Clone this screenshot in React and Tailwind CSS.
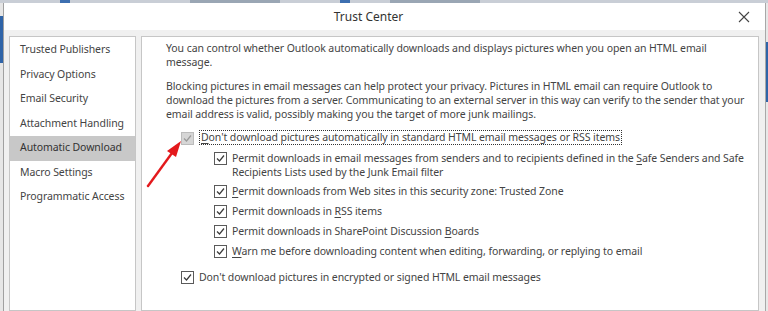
import React from "react";

const font = { fontFamily: '"Noto Sans", "Open Sans", sans-serif' };

function Box({ disabled }) {
  return (
    <span
      className={
        "mt-[1px] flex h-[13px] w-[13px] shrink-0 items-center justify-center border " +
        (disabled ? "border-[#bcbcbc] bg-[#d6d6d6]" : "border-[#5a5a5a] bg-white")
      }
    >
      <svg width="11" height="11" viewBox="0 0 11 11">
        <polyline
          points="2,5.5 4.5,8 9,2.5"
          fill="none"
          stroke={disabled ? "#9a9a9a" : "#3a3a3a"}
          strokeWidth="1.2"
        />
      </svg>
    </span>
  );
}

function U({ children }) {
  return <span className="underline underline-offset-2">{children}</span>;
}

function Row({ children, disabled, indent, h = "h-[20px]", focus }) {
  return (
    <div className={"flex items-start gap-[5px] py-[3px] " + h + (indent ? " pl-[33px]" : "")}>
      <Box disabled={disabled} />
      <div className={focus ? "border border-dotted border-[#333] px-[1px] -mt-[1px] leading-[13px]" : ""}>
        {children}
      </div>
    </div>
  );
}

export default function App() {
  const nav = [
    "Trusted Publishers",
    "Privacy Options",
    "Email Security",
    "Attachment Handling",
    "Automatic Download",
    "Macro Settings",
    "Programmatic Access",
  ];
  return (
    <div
      className="relative flex h-[311px] w-[768px] flex-col overflow-hidden bg-[#dfe3e8] text-[10.5px] tracking-[-0.08px] text-[#444]"
      style={font}
    >
      {/* background taskbar strip */}
      <div className="flex h-[3px] shrink-0 bg-[#c9ced6]">
        <div className="ml-[60px] w-[10px] bg-[#3d6fb0]" />
        <div className="ml-[120px] w-[90px] bg-[#9aa6b4]" />
        <div className="ml-[60px] w-[10px] bg-[#3d6fb0]" />
        <div className="ml-[40px] w-[90px] bg-[#9aa6b4]" />
      </div>
      <div className="flex flex-1">
        {/* left background strip */}
        <div className="flex w-[3px] shrink-0 flex-col bg-[#e6e6e6]">
          <div className="mt-[13px] h-[47px] bg-[#2f64a8]" />
        </div>
        {/* dialog */}
        <div className="flex w-[762px] flex-col border-l border-[#a0a0a0] bg-[#f0f0f0]">
          <div className="relative flex h-[27px] shrink-0 items-center bg-white">
            <div className="w-full pr-[32px] text-center text-[12px] tracking-normal text-[#333]">Trust Center</div>
            <svg className="absolute left-[734px] top-[8px]" width="12" height="12" viewBox="0 0 12 12">
              <path d="M1 1 L11 11 M11 1 L1 11" stroke="#444" strokeWidth="1.1" />
            </svg>
          </div>
          <div className="flex flex-1 gap-[5px] pl-[5px] pr-[6px] pt-[6px]">
            <div className="w-[127px] shrink-0 border border-[#c6c6c6] bg-white pt-[1px]">
              {nav.map((n, i) => (
                <div
                  key={n}
                  className={
                    "flex h-[24.5px] items-center pl-[10px] whitespace-nowrap " +
                    (i === 4 ? "bg-[#c8c8c8] text-[#333]" : "")
                  }
                >
                  {n}
                </div>
              ))}
            </div>
            <div className="flex-1 border border-[#c6c6c6] bg-white pl-[24px] pt-[4px] leading-[14px] whitespace-nowrap">
              <div>You can control whether Outlook automatically downloads and displays pictures when you open an HTML email</div>
              <div>message.</div>
              <div className="mt-[10px]">
                Blocking pictures in email messages can help protect your privacy. Pictures in HTML email can require Outlook to
              </div>
              <div>
                download the pictures from a server. Communicating to an external server in this way can verify to the sender that your
              </div>
              <div>email address is valid, possibly making you the target of more junk mailings.</div>
              <div className="mt-[7px] pl-[15px]">
                <Row disabled focus>
                  <U>D</U>on't download pictures automatically in standard HTML email messages or RSS items
                </Row>
                <Row indent h="h-[33px]">
                  <div>
                    Permit downloads in email messages from senders and to recipients defined in the <U>S</U>afe Senders and Safe
                  </div>
                  <div>Recipients Lists used by the Junk Email filter</div>
                </Row>
                <Row indent>
                  <U>P</U>ermit downloads from Web sites in this security zone: Trusted Zone
                </Row>
                <Row indent>
                  Permit downloads in <U>R</U>SS items
                </Row>
                <Row indent>
                  Permit downloads in SharePoint Discussion <U>B</U>oards
                </Row>
                <Row indent>
                  <U>W</U>arn me before downloading content when editing, forwarding, or replying to email
                </Row>
                <div className="mt-[6px]">
                  <Row>Don't download pictures in encrypted or signed HTML email messages</Row>
                </div>
              </div>
            </div>
          </div>
        </div>
        {/* right background strip */}
        <div className="flex w-[3px] shrink-0 flex-col border-l border-[#a8a8a8] bg-[#e8e8e8]">
          <div className="mt-[39px] h-[60px] bg-[#2f64a8]" />
        </div>
      </div>
      {/* red arrow */}
      <svg className="pointer-events-none absolute left-0 top-0" width="768" height="311">
        <line x1="148" y1="186" x2="172" y2="153" stroke="#e3191c" strokeWidth="2.4" strokeLinecap="round" />
        <polygon points="181,141 167,151 176,157" fill="#e3191c" />
      </svg>
    </div>
  );
}
